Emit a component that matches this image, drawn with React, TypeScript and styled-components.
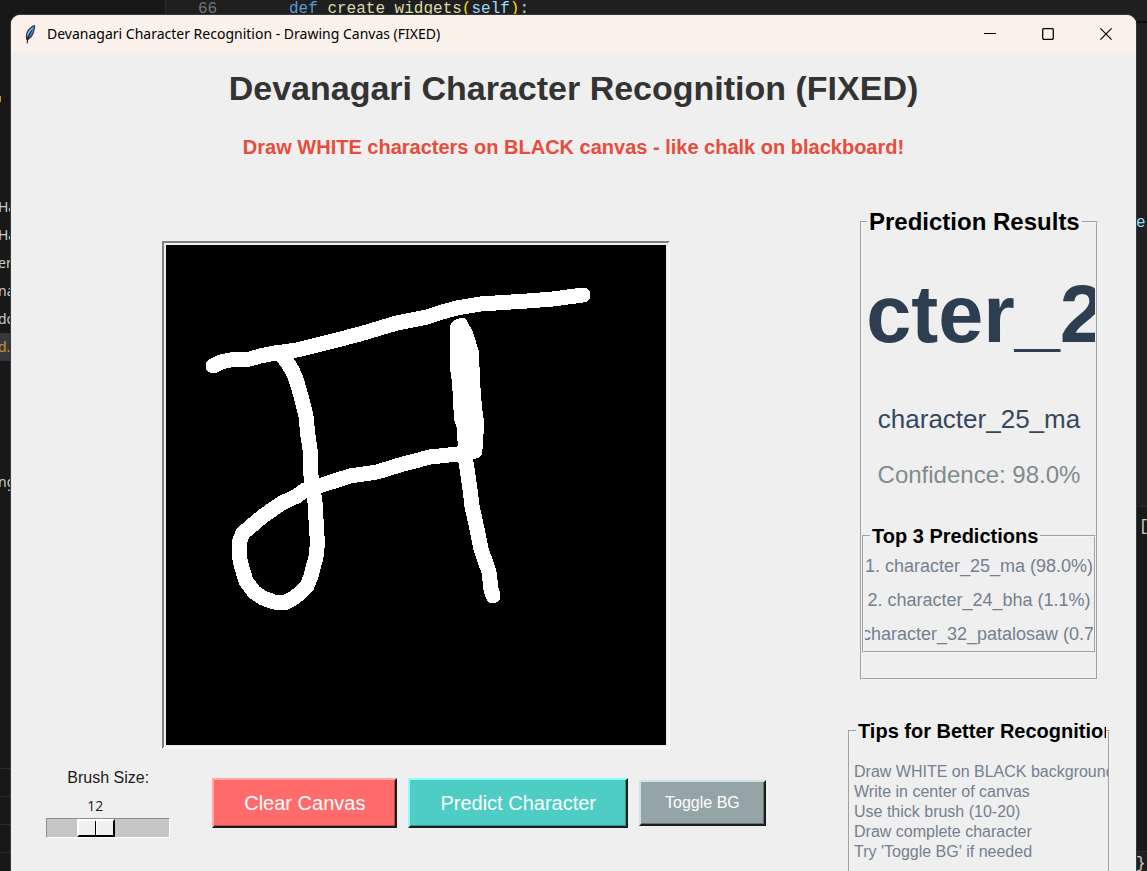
import React, { useState } from "react";
import styled, { createGlobalStyle } from "styled-components";

const GlobalStyle = createGlobalStyle`
  * { box-sizing: border-box; }
  body { margin: 0; background: #1f1f1f; }
`;

const sans = `"Liberation Sans", Arial, sans-serif`;
const ui = `"Noto Sans", "Open Sans", sans-serif`;
const mono = `"Liberation Mono", monospace`;

/* ---------- code editor behind the window ---------- */

const Desktop = styled.div`
  position: relative;
  display: flex;
  height: 100vh;
  min-width: 1000px;
  overflow: hidden;
  background: #1f1f1f;
`;

const Sidebar = styled.aside`
  width: 166px;
  padding-top: 84px;
  background: #181818;
  border-right: 1px solid #2b2b2b;
`;

const FileList = styled.ul<{ $gap: number }>`
  margin: ${(p) => p.$gap}px 0 0;
  padding: 0;
  list-style: none;
`;

const FileRow = styled.li<{ $active?: boolean; $ruled?: boolean }>`
  height: 28px;
  font: 14px/28px ${ui};
  text-indent: -2px;
  color: ${(p) => (p.$active ? "#c09a2b" : "#cccccc")};
  background: ${(p) => (p.$active ? "#37373d" : "transparent")};
  border-top: ${(p) => (p.$ruled ? "1px solid #2b2b2b" : "0")};
`;

const ChangeMark = styled.div`
  width: 1px;
  height: 6px;
  margin-top: 12px;
  background: #c8912f;
`;

const CodeArea = styled.div`
  flex: 1;
`;

const CodeLine = styled.div`
  display: flex;
  padding-left: 32px;
  font: 16px/18px ${mono};
  color: #cccccc;
  white-space: pre;
`;

const LineNumber = styled.span`
  width: 91px;
  color: #6e7681;
`;

const Token = styled.span<{ $color: string }>`
  color: ${(p) => p.$color};
`;

const EdgeStrip = styled.div`
  width: 11px;
  margin-top: 21px;
  border-top: 2px solid #0c0c0c;
  font: 16px/20px ${mono};
`;

const EdgeCell = styled.div<{ $top: number; $height: number; $indent?: number; $color?: string; $dark?: boolean }>`
  height: ${(p) => p.$height}px;
  padding: ${(p) => p.$top}px 0 0 ${(p) => p.$indent ?? 0}px;
  color: ${(p) => p.$color ?? "#cccccc"};
  background: ${(p) => (p.$dark ? "#181818" : "#1f1f1f")};
  border-bottom: 1px solid #2b2b2b;
  overflow: hidden;
`;

/* ---------- application window ---------- */

const Window = styled.main`
  position: absolute;
  inset: 15px 11px 0;
  overflow: hidden;
  border-radius: 9px 9px 0 0;
  background: #efefef;
  box-shadow: 0 0 0 1px #3a3838;
  font-family: ${sans};
`;

const TitleBar = styled.header`
  display: flex;
  align-items: center;
  height: 38px;
  padding: 0 1px 0 13px;
  background: #faf1eb;
`;

const WindowTitle = styled.span`
  flex: 1;
  margin-left: 10px;
  font: 14px/20px ${ui};
  color: #000000;
`;

const WindowButton = styled.button`
  display: grid;
  place-items: center;
  width: 58px;
  height: 38px;
  padding: 0;
  border: 0;
  background: transparent;
`;

const Heading = styled.h1`
  margin: 14px 0 0;
  font-size: 34px;
  line-height: 42px;
  text-align: center;
  color: #333333;
`;

const Hint = styled.p`
  margin: 26px 0 0;
  font-size: 20px;
  font-weight: bold;
  line-height: 24px;
  text-align: center;
  color: #e74c3c;
`;

const Columns = styled.div`
  display: grid;
  grid-template-columns: minmax(0, 1fr) 262px;
  gap: 27px;
  padding: 49px 26px 0 0;
`;

const DrawColumn = styled.section`
  display: flex;
  flex-direction: column;
  align-items: center;
  padding-top: 33px;
`;

const CanvasFrame = styled.div`
  padding: 2px;
  border: 2px solid;
  border-color: #808080 #f7f7f7 #f7f7f7 #808080;

  svg {
    display: block;
    width: 500px;
    height: 500px;
    background: #000000;
  }
`;

const Controls = styled.div`
  display: flex;
  align-items: center;
  gap: 11px;
  margin-top: 18px;
  padding-right: 20px;
`;

const Brush = styled.div`
  width: 124px;
  margin-right: 31px;
`;

const BrushLabel = styled.label`
  display: block;
  font-size: 16px;
  line-height: 22px;
  text-align: center;
  color: #1a1a1a;
`;

const BrushValue = styled.output`
  display: block;
  width: 38px;
  margin-top: 7px;
  font: 14px/20px "Open Sans", ${ui};
  text-align: center;
  color: #1a1a1a;
`;

const Slider = styled.input`
  display: block;
  appearance: none;
  width: 124px;
  height: 20px;
  margin: 2px 0 0;
  border: 1px solid;
  border-color: #8e8e8e #ffffff #ffffff #8e8e8e;
  background: #c6c6c6;

  &::-webkit-slider-thumb {
    appearance: none;
    width: 38px;
    height: 18px;
    border: 2px solid;
    border-color: #ffffff #000000 #000000 #ffffff;
    background: linear-gradient(90deg, #f0f0f0 16px, #000000 16px, #000000 17px, #ffffff 17px, #ffffff 18px, #f0f0f0 18px);
  }
`;

const ActionButton = styled.button<{ $fill: string; $light: string; $shade: string; $small?: boolean }>`
  padding: 12px ${(p) => (p.$small ? 24 : 30)}px;
  border: 2px solid;
  border-color: ${(p) => p.$light} #1c1c1c #1c1c1c ${(p) => p.$light};
  background: ${(p) => p.$fill};
  box-shadow: inset -1px -1px ${(p) => p.$shade};
  font-family: ${sans};
  font-size: ${(p) => (p.$small ? 16 : 20)}px;
  line-height: ${(p) => (p.$small ? 18 : 22)}px;
  color: #ffffff;
  white-space: nowrap;
`;

const SideColumn = styled.aside`
  display: flex;
  flex-direction: column;
  align-items: center;
  gap: 39px;
`;

const Group = styled.fieldset<{ $width: number }>`
  width: ${(p) => p.$width}px;
  min-width: 0;
  margin: 0;
  padding: 0;
  border: 2px groove #f4f4f4;
`;

const Legend = styled.legend<{ $size: number; $indent: number }>`
  max-width: 250px;
  margin-left: ${(p) => p.$indent}px;
  padding: 0 2px;
  overflow: hidden;
  font-size: ${(p) => p.$size}px;
  font-weight: bold;
  line-height: ${(p) => p.$size + 4}px;
  white-space: nowrap;
  color: #000000;
`;

const ResultLine = styled.div<{ $size: number; $line: number; $gap: number; $color: string }>`
  display: flex;
  justify-content: center;
  margin-top: ${(p) => p.$gap}px;
  overflow: hidden;
  font-size: ${(p) => p.$size}px;
  line-height: ${(p) => p.$line}px;
  white-space: nowrap;
  color: ${(p) => p.$color};
`;

const BigResult = styled(ResultLine)`
  margin-left: 5px;
  margin-right: 1px;
  font-weight: bold;
`;

const ResultBody = styled.div`
  padding-bottom: 25px;
`;

const TopThree = styled.div`
  display: flex;
  justify-content: center;
  margin-top: 35px;
`;

const Ranking = styled.ol`
  margin: 0;
  padding: 1px 1px 0;
  list-style: none;
`;

const RankItem = styled.li`
  display: flex;
  justify-content: center;
  overflow: hidden;
  font-size: 18px;
  line-height: 34px;
  white-space: nowrap;
  color: #748090;
`;

const Tips = styled.ul`
  margin: 0;
  padding: 19px 0 40px 4px;
  overflow: hidden;
  list-style: none;
  font-size: 16px;
  line-height: 20px;
  white-space: nowrap;
  color: #748090;
`;

const FeatherIcon = () => (
  <svg width="13" height="20" viewBox="0 0 13 20" aria-hidden="true">
    <path d="M11 0.8 C7.5 1.8 4.2 4.6 2.6 8.2 C1.5 11 1.6 13.8 2.6 16.4 C5.4 15.6 8.6 12.6 9.6 9.4 C10.5 6.4 11.6 3.6 11 0.8Z" fill="#2d3a4c" />
    <path d="M9.2 2.8 C6.4 4.4 4.4 7 3.2 10 L3.4 13.4 C5.2 10.4 7.2 7.4 9.8 2.8Z" fill="#86b8ea" />
    <path d="M10.2 3 C9.6 7.6 8 11.4 4.6 14.2 C5.4 10.4 7.4 6.4 10.2 3Z" fill="#3f80cf" />
    <path d="M7.6 6.4 C5.6 9.6 3.8 12.6 3.2 19.4" fill="none" stroke="#141414" strokeWidth="1" />
  </svg>
);

const handStrokes = [
  "47,121 55,117 64,115 84,114 94,111 109,108 131,105 151,100 171,95 194,89 214,83 231,78 261,72 276,67 291,63 314,59 361,56 387,54 417,50",
  "117,112 121,117 126,125 130,134 135,151 140,171 142,191 144,204 145,231 149,257 151,291 151,303 150,312 147,323 145,331 141,341 133,349 126,354 118,358 108,357 97,353 88,347 80,336 76,323 73,310 73,304 74,295 77,288 97,271 116,258 131,251 139,245 159,239 184,231 211,227 237,219 249,216 264,212 292,209 309,206",
  "299,206 300,217 304,244 306,261 311,284 315,304 323,327 325,344 327,351",
];

const predictions = [
  "1. character_25_ma (98.0%)",
  "2. character_24_bha (1.1%)",
  "3. character_32_patalosaw (0.7%)",
];

const tips = [
  "Draw WHITE on BLACK background",
  "Write in center of canvas",
  "Use thick brush (10-20)",
  "Draw complete character",
  "Try 'Toggle BG' if needed",
];

const MIN_BRUSH = 5;
const MAX_BRUSH = 25;

export default function App() {
  const [brush, setBrush] = useState(12);
  const thumbOffset = Math.round(((brush - MIN_BRUSH) / (MAX_BRUSH - MIN_BRUSH)) * 84);

  return (
    <Desktop>
      <GlobalStyle />
      <Sidebar>
        <ChangeMark />
        <FileList $gap={91}>
          <FileRow>Ha</FileRow>
          <FileRow>Ha</FileRow>
          <FileRow>er</FileRow>
          <FileRow>na</FileRow>
          <FileRow>do</FileRow>
          <FileRow $active>d.p</FileRow>
        </FileList>
        <FileList $gap={107}>
          <FileRow>ng</FileRow>
        </FileList>
        <FileList $gap={272}>
          <FileRow $ruled />
          <FileRow $ruled />
          <FileRow $ruled />
          <FileRow $ruled />
        </FileList>
      </Sidebar>
      <CodeArea>
        <CodeLine>
          <LineNumber>66</LineNumber>
          <Token $color="#569cd6">def </Token>
          <Token $color="#dcdcaa">create_widgets</Token>
          <Token $color="#ffd700">(</Token>
          <Token $color="#9cdcfe">self</Token>
          <Token $color="#ffd700">)</Token>:
        </CodeLine>
      </CodeArea>
      <EdgeStrip>
        <EdgeCell $top={190} $height={484} $color="#9cdcfe">e</EdgeCell>
        <EdgeCell $top={10} $height={345} $indent={3} $dark>[</EdgeCell>
        <EdgeCell $top={2} $height={40}>{"}"}</EdgeCell>
      </EdgeStrip>

      <Window>
        <TitleBar>
          <FeatherIcon />
          <WindowTitle>Devanagari Character Recognition - Drawing Canvas (FIXED)</WindowTitle>
          <WindowButton aria-label="Minimize">
            <svg width="12" height="12" viewBox="0 0 12 12" stroke="#000">
              <path d="M0 5.5H12" />
            </svg>
          </WindowButton>
          <WindowButton aria-label="Maximize">
            <svg width="12" height="12" viewBox="0 0 12 12" stroke="#000" fill="none">
              <rect x="0.7" y="0.7" width="10.6" height="10.6" rx="1" strokeWidth="1.3" />
            </svg>
          </WindowButton>
          <WindowButton aria-label="Close">
            <svg width="12" height="12" viewBox="0 0 12 12" stroke="#000" strokeWidth="1.2">
              <path d="M0.4 0.4L11.6 11.6M11.6 0.4L0.4 11.6" />
            </svg>
          </WindowButton>
        </TitleBar>

        <Heading>Devanagari Character Recognition (FIXED)</Heading>
        <Hint>Draw WHITE characters on BLACK canvas - like chalk on blackboard!</Hint>

        <Columns>
          <DrawColumn>
            <CanvasFrame>
              <svg viewBox="0 0 500 500" role="img" aria-label="Hand-drawn character" shapeRendering="crispEdges">
                <g fill="none" stroke="#ffffff" strokeWidth="15" strokeLinecap="round" strokeLinejoin="round">
                  {handStrokes.map((points) => (
                    <polyline key={points} points={points} />
                  ))}
                </g>
                <polygon
                  fill="#ffffff"
                  points="284,81 287,76 291,74 294,73 298,73 301,76 307,87 310,97 313,107 314,137 316,162 318,177 317,202 315,211 308,214 292,208 291,184 288,174 286,137 284,124"
                />
              </svg>
            </CanvasFrame>
            <Controls>
              <Brush>
                <BrushLabel htmlFor="brush">Brush Size:</BrushLabel>
                <BrushValue htmlFor="brush" style={{ marginLeft: thumbOffset + 1 }}>
                  {brush}
                </BrushValue>
                <Slider
                  id="brush"
                  type="range"
                  min={MIN_BRUSH}
                  max={MAX_BRUSH}
                  value={brush}
                  onChange={(e) => setBrush(Number(e.target.value))}
                />
              </Brush>
              <ActionButton $fill="#ff6b6b" $light="#ffa9a9" $shade="#b34b4b">
                Clear Canvas
              </ActionButton>
              <ActionButton $fill="#4ecdc4" $light="#8dfff6" $shade="#379089">
                Predict Character
              </ActionButton>
              <ActionButton $fill="#95a5a6" $light="#cfe3e4" $shade="#687374" $small>
                Toggle BG
              </ActionButton>
            </Controls>
          </DrawColumn>

          <SideColumn>
            <Group $width={238}>
              <Legend $size={24} $indent={5}>
                Prediction Results
              </Legend>
              <ResultBody>
                <BigResult $size={81} $line={92} $gap={32} $color="#2c3e50">
                  character_25_ma
                </BigResult>
                <ResultLine $size={26} $line={30} $gap={44} $color="#34495e">
                  character_25_ma
                </ResultLine>
                <ResultLine $size={24} $line={28} $gap={27} $color="#7f8c8d">
                  Confidence: 98.0%
                </ResultLine>
                <TopThree>
                  <Group $width={234}>
                    <Legend $size={20} $indent={6}>
                      Top 3 Predictions
                    </Legend>
                    <Ranking>
                      {predictions.map((text) => (
                        <RankItem key={text}>{text}</RankItem>
                      ))}
                    </Ranking>
                  </Group>
                </TopThree>
              </ResultBody>
            </Group>

            <Group $width={262}>
              <Legend $size={20} $indent={6}>
                Tips for Better Recognition
              </Legend>
              <Tips>
                {tips.map((tip) => (
                  <li key={tip}>{tip}</li>
                ))}
              </Tips>
            </Group>
          </SideColumn>
        </Columns>
      </Window>
    </Desktop>
  );
}
